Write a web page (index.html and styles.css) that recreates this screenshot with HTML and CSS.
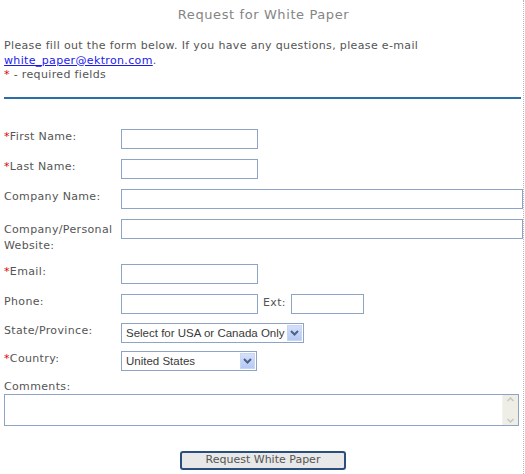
FILE: index.html
```html
<!DOCTYPE html>
<html>
<head>
<meta charset="utf-8">
<link rel="stylesheet" href="styles.css">
</head>
<body>
<div class="page">
  <h1 class="title">Request for White Paper</h1>
  <div class="intro">
    Please fill out the form below. If you have any questions, please e-mail<br>
    <a href="#" class="mail">white_paper@ektron.com</a>.<br>
    <span class="req">*</span> - required fields
  </div>
  <div class="rule"></div>
  <form class="form">
    <div class="row">
      <label class="lbl"><span class="req">*</span>First Name:</label>
      <input class="inp short" type="text">
    </div>
    <div class="row">
      <label class="lbl"><span class="req">*</span>Last Name:</label>
      <input class="inp short" type="text">
    </div>
    <div class="row">
      <label class="lbl">Company Name:</label>
      <input class="inp wide" type="text">
    </div>
    <div class="row">
      <label class="lbl two">Company/Personal Website:</label>
      <input class="inp wide" type="text">
    </div>
    <div class="row">
      <label class="lbl"><span class="req">*</span>Email:</label>
      <input class="inp short" type="text">
    </div>
    <div class="row">
      <label class="lbl">Phone:</label>
      <input class="inp short" type="text">
      <span class="ext">Ext:</span>
      <input class="inp extinp" type="text">
    </div>
    <div class="row row-state">
      <label class="lbl">State/Province:</label>
      <div class="sel sel-state">
        <span class="seltext">Select for USA or Canada Only</span>
        <span class="selbtn"><svg width="9" height="6" viewBox="0 0 9 6"><path d="M1 1 L4.5 4.5 L8 1" fill="none" stroke="#4d6185" stroke-width="2"/></svg></span>
      </div>
    </div>
    <div class="row row-country">
      <label class="lbl"><span class="req">*</span>Country:</label>
      <div class="sel sel-country">
        <span class="seltext">United States</span>
        <span class="selbtn"><svg width="9" height="6" viewBox="0 0 9 6"><path d="M1 1 L4.5 4.5 L8 1" fill="none" stroke="#4d6185" stroke-width="2"/></svg></span>
      </div>
    </div>
    <div class="comments">
      <label class="lbl">Comments:</label>
      <div class="tawrap">
        <textarea class="ta"></textarea>
        <div class="scroll">
          <span class="sarrow"><svg width="7" height="5" viewBox="0 0 7 5"><path d="M0.5 4 L3.5 1 L6.5 4" fill="none" stroke="#c8c8bc" stroke-width="1.5"/></svg></span>
          <span class="sarrow"><svg width="7" height="5" viewBox="0 0 7 5"><path d="M0.5 1 L3.5 4 L6.5 1" fill="none" stroke="#c8c8bc" stroke-width="1.5"/></svg></span>
        </div>
      </div>
    </div>
    <div class="actions">
      <button type="button" class="btn">Request White Paper</button>
    </div>
  </form>
</div>
</body>
</html>
```

FILE: styles.css
```css
* { box-sizing: border-box; }
html, body { margin: 0; padding: 0; background: #fff; }
body {
  font-family: "DejaVu Sans", Verdana, sans-serif;
  font-size: 11px;
  letter-spacing: 0.35px;
  color: #555;
}
.page {
  width: 524px;
  height: 474px;
  border-right: 1px dotted #b8b8b8;
  padding: 7px 0 0 4px;
}
.title {
  margin: 0;
  font-size: 13px;
  line-height: 16px;
  letter-spacing: 0.6px;
  font-weight: normal;
  color: #858585;
  text-align: center;
}
.intro {
  margin-top: 16px;
  line-height: 14.5px;
}
.mail { color: #1a1aee; text-decoration: underline; }
.req { color: #e00000; }
.rule {
  margin-top: 14px;
  width: 517px;
  height: 2px;
  background: #2a6ea8;
}
.form { margin: 30px 0 0 0; }
.row {
  display: flex;
  align-items: flex-start;
  margin-bottom: 10px;
}
.lbl {
  width: 117px;
  flex: none;
  padding-top: 1px;
  line-height: 14px;
}
.lbl.two { line-height: 16px; padding-top: 3px; }
.inp {
  height: 20px;
  border: 1px solid #8ea4c4;
  background: #fff;
  margin: 0;
  padding: 0 3px;
  font: inherit;
}
.short { width: 137px; }
.wide { width: 402px; }
.ext {
  margin-left: 5px;
  width: 28px;
  padding-top: 2px;
  line-height: 14px;
}
.extinp { width: 73px; }
.row-state { margin-top: -1px; margin-bottom: 8px; }
.row-country { margin-bottom: 9px; }
.sel {
  display: flex;
  height: 20px;
  border: 1px solid #8ea4c4;
  background: #fff;
  padding: 1px;
  font-family: "Liberation Sans", Arial, sans-serif;
  font-size: 11.5px;
  letter-spacing: 0;
  color: #3a3a3a;
}
.sel-state { width: 183px; }
.sel-country { width: 136px; }
.seltext {
  flex: 1;
  padding-left: 3px;
  line-height: 16px;
  white-space: nowrap;
}
.selbtn {
  flex: none;
  width: 15px;
  display: flex;
  align-items: center;
  justify-content: center;
  background: linear-gradient(#d4e0fb, #b6c9f4);
  border: 1px solid #c8d6f6;
}
.comments .lbl { display: block; width: auto; padding: 0; }
.tawrap {
  display: flex;
  width: 515px;
  height: 32px;
  border: 1px solid #8ea4c4;
  background: #fff;
}
.ta {
  flex: 1;
  border: 0;
  resize: none;
  margin: 0;
  padding: 2px;
  font: inherit;
  outline: none;
}
.scroll {
  flex: none;
  width: 16px;
  background: #eeeee6;
  display: flex;
  flex-direction: column;
  justify-content: space-between;
  align-items: center;
  padding: 2px 0;
  border-left: 1px solid #f4f4ee;
}
.sarrow { display: flex; }
.actions {
  margin-top: 25px;
  padding-left: 176px;
}
.btn {
  width: 166px;
  height: 19px;
  padding: 0;
  margin: 0;
  border: 2px solid #2a4f7e;
  border-radius: 3px;
  background: #e8e8e8;
  font-family: "DejaVu Sans", Verdana, sans-serif;
  font-size: 11px;
  letter-spacing: 0;
  color: #555;
  line-height: 14px;
}
```
